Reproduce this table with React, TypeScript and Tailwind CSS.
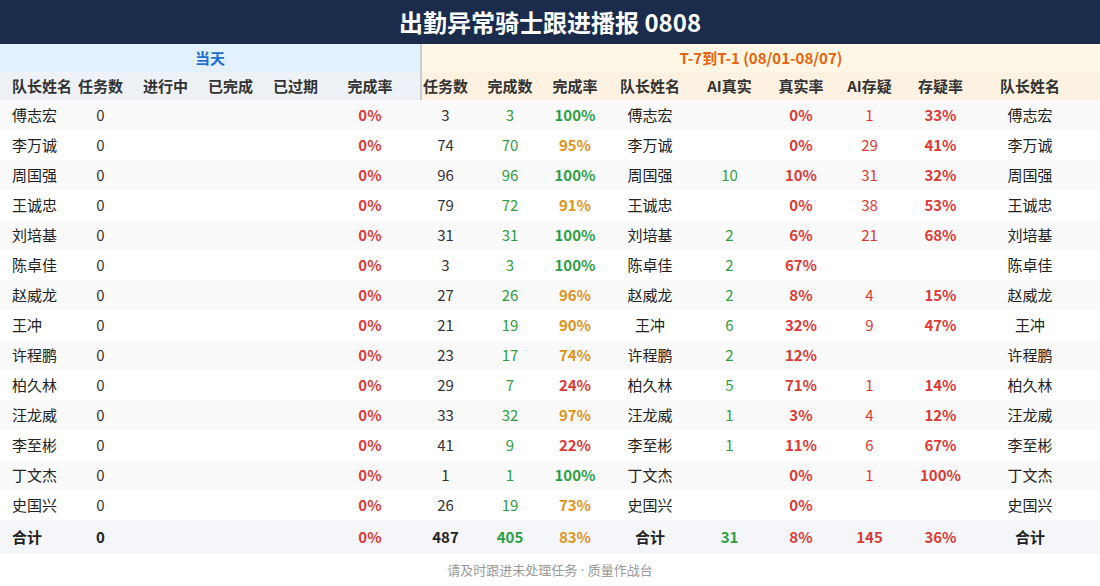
import React from "react";

const GRID =
  "grid grid-cols-[68px_65px_65px_65px_65px_92px_59px_62px_68px_82px_77px_66px_71px_71px_108px_1fr]";

const GREEN = "text-[#2f9e44]";
const RED = "text-[#dc3a37]";
const ORANGE = "text-[#e0931a]";

type Row = [string, number, number, string, number | "", string, number | "", string];

const rows: Row[] = [
  ["傅志宏", 3, 3, "100%", "", "0%", 1, "33%"],
  ["李万诚", 74, 70, "95%", "", "0%", 29, "41%"],
  ["周国强", 96, 96, "100%", 10, "10%", 31, "32%"],
  ["王诚忠", 79, 72, "91%", "", "0%", 38, "53%"],
  ["刘培基", 31, 31, "100%", 2, "6%", 21, "68%"],
  ["陈卓佳", 3, 3, "100%", 2, "67%", "", ""],
  ["赵威龙", 27, 26, "96%", 2, "8%", 4, "15%"],
  ["王冲", 21, 19, "90%", 6, "32%", 9, "47%"],
  ["许程鹏", 23, 17, "74%", 2, "12%", "", ""],
  ["柏久林", 29, 7, "24%", 5, "71%", 1, "14%"],
  ["汪龙威", 33, 32, "97%", 1, "3%", 4, "12%"],
  ["李至彬", 41, 9, "22%", 1, "11%", 6, "67%"],
  ["丁文杰", 1, 1, "100%", "", "0%", 1, "100%"],
  ["史国兴", 26, 19, "73%", "", "0%", "", ""],
];

function rateColor(r: string) {
  const v = parseInt(r, 10);
  if (v >= 100) return GREEN;
  if (v >= 70) return ORANGE;
  return RED;
}

const headers = [
  "队长姓名",
  "任务数",
  "进行中",
  "已完成",
  "已过期",
  "完成率",
  "任务数",
  "完成数",
  "完成率",
  "队长姓名",
  "AI真实",
  "真实率",
  "AI存疑",
  "存疑率",
  "队长姓名",
  "",
];

function C({
  children,
  className = "",
}: {
  children?: React.ReactNode;
  className?: string;
}) {
  return (
    <div className={"flex items-center justify-center whitespace-nowrap " + className}>
      {children}
    </div>
  );
}

export default function App() {
  return (
    <div
      className="w-[1100px] h-[586px] bg-white flex flex-col overflow-hidden"
      style={{ fontFamily: '"Noto Sans CJK SC", "Noto Sans", sans-serif' }}
    >
      <div className="h-[44px] bg-[#1a2b4c] flex items-center justify-center text-white text-[24px] font-bold">
        出勤异常骑士跟进播报 0808
      </div>

      <div className="h-[28px] flex text-[15px] font-bold">
        <div className="w-[420px] bg-[#e3f0fd] text-[#1f6fd0] flex items-center justify-center">
          当天
        </div>
        <div className="flex-1 bg-[#fff7e5] border-l-2 border-[#c9cdd3] text-[#e8620c] flex items-center justify-center">
          T-7到T-1 (08/01-08/07)
        </div>
      </div>

      <div className={GRID + " h-[28px] text-[15px] font-bold text-[#333]"}>
        {headers.map((h, i) => {
          let cls = i < 6 ? "bg-[#eef1f6]" : "bg-[#fdf1e1]";
          if (i === 0) cls += " !justify-start pl-[12px] relative z-10";
          if (i === 5) cls += " pr-[8px]";
          if (i === 6) cls += " border-l-2 border-[#c9cdd3] pr-[10px]";
          return (
            <C key={i} className={cls}>
              {h}
            </C>
          );
        })}
      </div>

      {rows.map((r, idx) => (
        <div
          key={idx}
          className={
            GRID +
            " h-[30px] text-[15px] text-[#333] " +
            (idx % 2 === 0 ? "bg-[#fafafa]" : "bg-white")
          }
        >
          <C className="!justify-start pl-[12px] text-[#222]">{r[0]}</C>
          <C>0</C>
          <C />
          <C />
          <C />
          <C className={"pr-[8px] font-bold " + RED}>0%</C>
          <C className="pr-[8px]">{r[1]}</C>
          <C className={GREEN}>{r[2]}</C>
          <C className={"font-bold " + rateColor(r[3])}>{r[3]}</C>
          <C className="text-[#222]">{r[0]}</C>
          <C className={GREEN}>{r[4]}</C>
          <C className={"font-bold " + RED}>{r[5]}</C>
          <C className={RED}>{r[6]}</C>
          <C className={"font-bold " + RED}>{r[7]}</C>
          <C className="text-[#222]">{r[0]}</C>
          <C />
        </div>
      ))}

      <div className={GRID + " h-[34px] text-[15px] font-bold text-[#222] bg-[#f4f6fa]"}>
        <C className="!justify-start pl-[12px]">合计</C>
        <C>0</C>
        <C />
        <C />
        <C />
        <C className={"pr-[8px] " + RED}>0%</C>
        <C className="pr-[8px]">487</C>
        <C className={GREEN}>405</C>
        <C className={ORANGE}>83%</C>
        <C>合计</C>
        <C className={GREEN}>31</C>
        <C className={RED}>8%</C>
        <C className={RED}>145</C>
        <C className={RED}>36%</C>
        <C>合计</C>
        <C />
      </div>

      <div className="flex-1 flex items-center justify-center text-[13px] text-[#999]">
        <span>
          请及时跟进未处理任务<span className="font-['Noto_Sans',sans-serif]"> · </span>质量作战台
        </span>
      </div>
    </div>
  );
}
